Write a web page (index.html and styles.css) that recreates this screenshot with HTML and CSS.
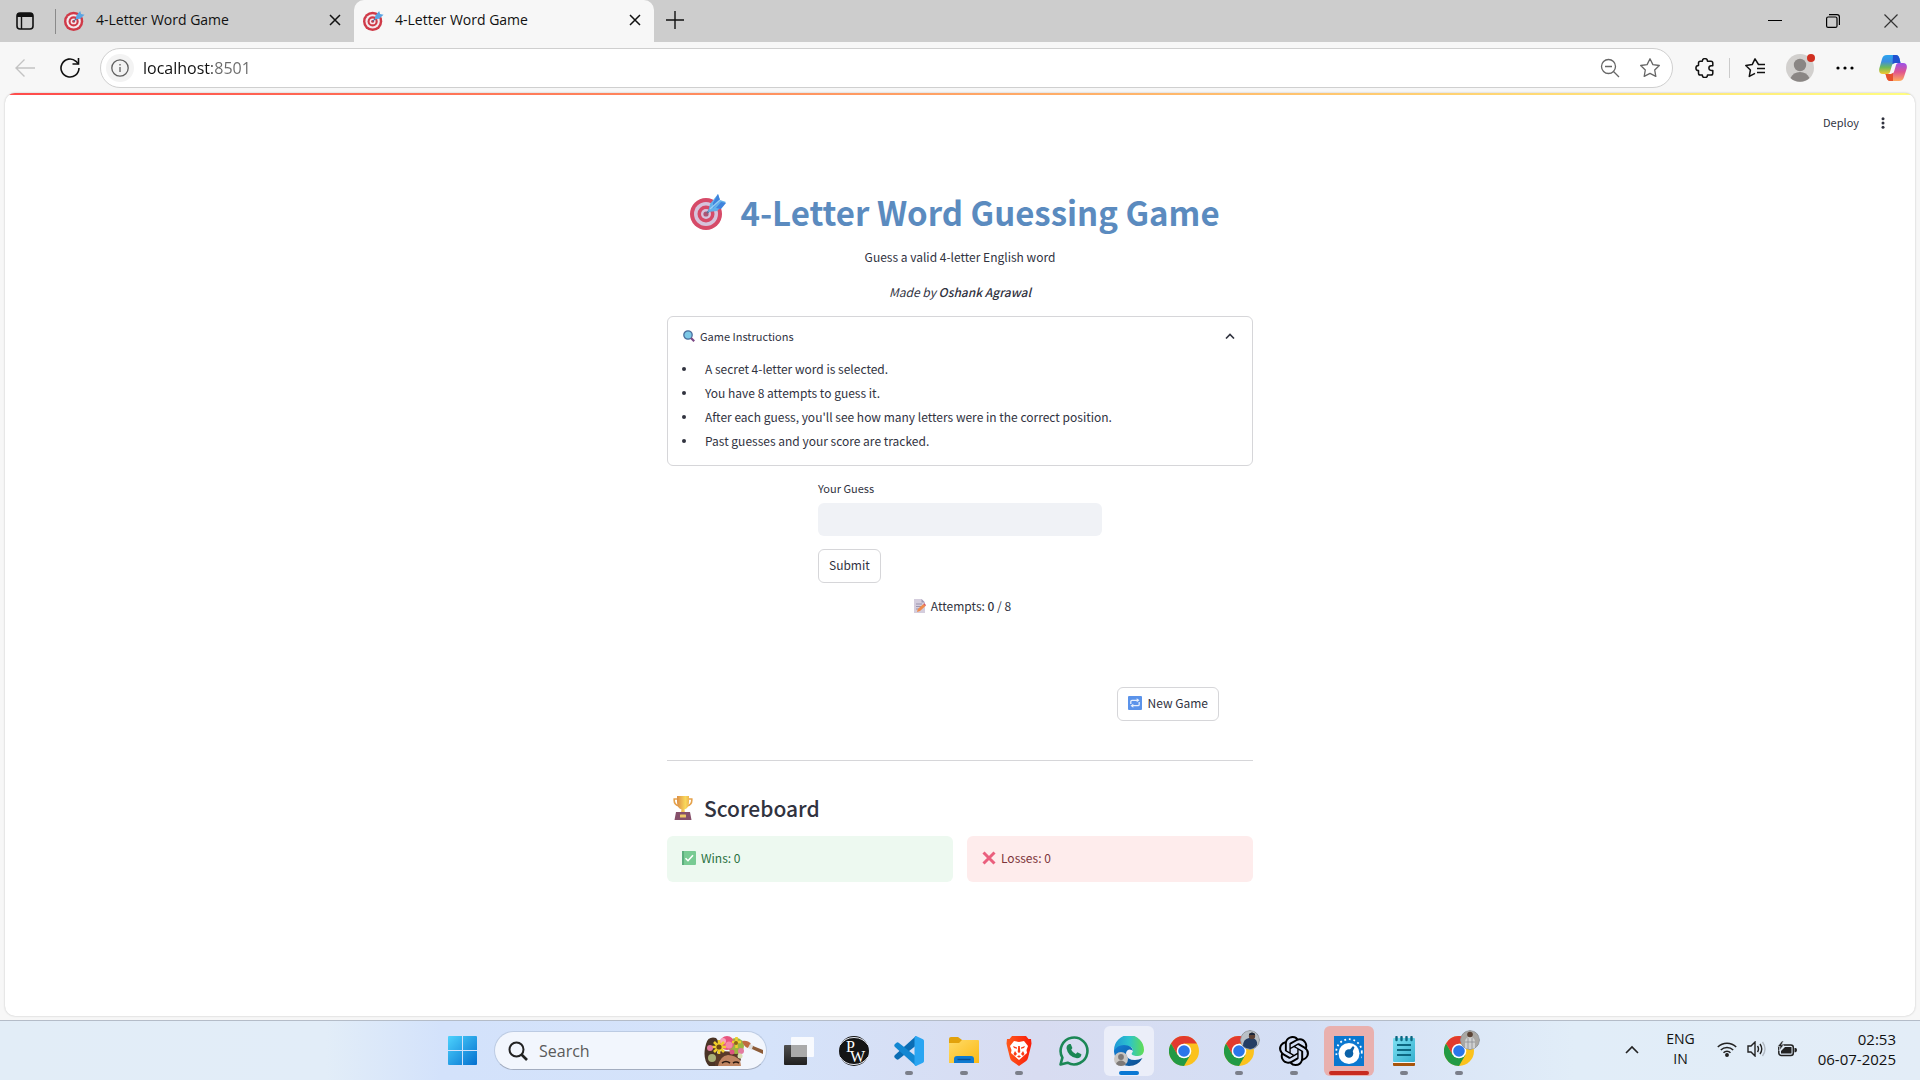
FILE: index.html
```html
<!DOCTYPE html>
<html lang="en">
<head>
<meta charset="utf-8">
<title>4-Letter Word Game</title>
<link rel="stylesheet" href="styles.css">
</head>
<body>
<svg class="defs" aria-hidden="true">
  <defs>
    <linearGradient id="win" x1="0" y1="0" x2="1" y2="1"><stop offset="0" stop-color="#4cd2fd"/><stop offset="1" stop-color="#0470cf"/></linearGradient>
    <linearGradient id="tv" x1="0" y1="0" x2="0" y2="1"><stop offset="0" stop-color="#505050"/><stop offset="1" stop-color="#202020"/></linearGradient>
    <linearGradient id="folder" x1="0" y1="0" x2="1" y2="1"><stop offset="0" stop-color="#ffdb68"/><stop offset="1" stop-color="#fbb914"/></linearGradient>
    <linearGradient id="brave" x1="0" y1="0" x2="1" y2="0"><stop offset="0" stop-color="#ff5a1c"/><stop offset="1" stop-color="#f91c0a"/></linearGradient>
    <linearGradient id="edgeTop" x1="0" y1="0" x2="1" y2="0"><stop offset="0" stop-color="#1f98d8"/><stop offset=".5" stop-color="#2cc3cd"/><stop offset="1" stop-color="#62dd52"/></linearGradient>
    <linearGradient id="edgeBot" x1="0" y1="0" x2="1" y2="1"><stop offset="0" stop-color="#1480d8"/><stop offset="1" stop-color="#0c4c8c"/></linearGradient>
    <linearGradient id="note" x1="0" y1="0" x2="1" y2="1"><stop offset="0" stop-color="#7de0f2"/><stop offset="1" stop-color="#35b0cf"/></linearGradient>
    <linearGradient id="cupG" x1="0" y1="0" x2="1" y2="0"><stop offset="0" stop-color="#dd8f47"/><stop offset=".7" stop-color="#f9d85c"/><stop offset="1" stop-color="#eeb650"/></linearGradient>
    <linearGradient id="copA" x1="0" y1="0" x2="0" y2="1"><stop offset="0" stop-color="#2ba5ef"/><stop offset=".35" stop-color="#3d8ee0"/><stop offset=".65" stop-color="#6db95b"/><stop offset="1" stop-color="#f3c72f"/></linearGradient>
    <linearGradient id="copB" x1="0" y1="0" x2="0" y2="1"><stop offset="0" stop-color="#9b52ea"/><stop offset=".5" stop-color="#e0558f"/><stop offset="1" stop-color="#ffab5e"/></linearGradient>
    <symbol id="target" viewBox="0 0 24 24">
      <circle cx="11" cy="13" r="11" fill="#cf3a48"/><circle cx="11" cy="13" r="8.2" fill="#f5e9ee"/><circle cx="11" cy="13" r="5.8" fill="#cf3a48"/><circle cx="11" cy="13" r="3.4" fill="#f5e9ee"/><circle cx="11" cy="13" r="1.7" fill="#cf3a48"/>
      <path d="M11 13 15.500 8.500" stroke="#3d6fa5" stroke-width="1.200"/><path d="M13.500 10.500 14 6.500 18.500 1l1 3.500L23.500 5.500 18.500 10z" fill="#5aa4e2"/>
    </symbol>
    <symbol id="target-soft" viewBox="0 0 36 36">
      <circle cx="16" cy="20" r="16" fill="#d64a68"/><circle cx="16" cy="20" r="12" fill="#d6c3dc"/><circle cx="16" cy="20" r="8.500" fill="#d64a68"/><circle cx="16" cy="20" r="5" fill="#d6c3dc"/><circle cx="16" cy="20" r="2.600" fill="#ad5474"/>
      <path d="M17 19 24 12" stroke="#5d6f94" stroke-width="2"/><path d="M18 18l2-8 8-10 2 6 6 2-9 9z" fill="#62b0ea"/><path d="M23 9 28 0l2 6-7 8zM26 14l5-6 5 1-5 6z" fill="#3f83dc"/><path d="M20 15 30 6" stroke="#9bd0f5" stroke-width="1.200"/>
    </symbol>
    <symbol id="chrome" viewBox="0 0 30 30">
      <circle cx="15" cy="15" r="15" fill="#fbc21d"/>
      <path d="M2 7.500A15 15 0 0 1 28 7.500H15L8.500 18.700z" fill="#e23a2e"/>
      <path d="M2 7.500A15 15 0 0 0 15 30l6.500-11.300L15 15 8.500 18.800z" fill="#229a45"/>
      <circle cx="15" cy="15" r="7.300" fill="#fff"/><circle cx="15" cy="15" r="5.800" fill="#2a76ea"/>
    </symbol>
    <symbol id="x" viewBox="0 0 14 14"><path d="M2 2l10 10M12 2 2 12" stroke="currentColor" stroke-width="1.500" fill="none"/></symbol>
  </defs>
</svg>

<div class="browser">
  <header class="tabs">
    <button class="icon-btn tab-menu" aria-label="Tab actions menu">
      <svg width="18" height="18" viewBox="0 0 18 18"><rect x="1" y="1" width="16" height="16" rx="3" fill="none" stroke="#111" stroke-width="1.600"/><path d="M1 5V4a3 3 0 0 1 3-3h10a3 3 0 0 1 3 3v1z" fill="#111"/><path d="M5.500 5v12" stroke="#111" stroke-width="1.400"/></svg>
    </button>
    <div class="tab tab-idle">
      <svg class="favicon"><use href="#target"/></svg><span class="tab-title">4-Letter Word Game</span>
      <button class="icon-btn" aria-label="Close tab"><svg width="14" height="14"><use href="#x"/></svg></button>
    </div>
    <div class="tab tab-active">
      <svg class="favicon"><use href="#target"/></svg><span class="tab-title">4-Letter Word Game</span>
      <button class="icon-btn" aria-label="Close tab"><svg width="14" height="14"><use href="#x"/></svg></button>
    </div>
    <button class="icon-btn new-tab" aria-label="New tab"><svg width="18" height="18" viewBox="0 0 18 18"><path d="M9 0v18M0 9h18" stroke="#111" stroke-width="1.400"/></svg></button>
    <div class="window-controls">
      <button class="icon-btn" aria-label="Minimize"><svg width="14" height="14" viewBox="0 0 14 14"><path d="M0 6.500h14" stroke="#000"/></svg></button>
      <button class="icon-btn" aria-label="Restore"><svg width="14" height="14" viewBox="0 0 14 14" fill="none" stroke="#000" stroke-width="1.200"><rect x=".6" y="3" width="10.400" height="10.400" rx="1.500"/><path d="M3 .6h8a2.400 2.400 0 0 1 2.400 2.400v8"/></svg></button>
      <button class="icon-btn" aria-label="Close"><svg width="14" height="14" viewBox="0 0 14 14"><path d="M.5.5l13 13M13.500.5l-13 13" stroke="#333" stroke-width="1.200"/></svg></button>
    </div>
  </header>

  <nav class="toolbar">
    <button class="icon-btn" aria-label="Back"><svg width="20" height="20" viewBox="0 0 20 20" fill="none" stroke="#c3c3c3" stroke-width="1.400"><path d="M20 10H1M9.500 1.500 1 10l8.500 8.500"/></svg></button>
    <button class="icon-btn" aria-label="Reload"><svg width="20" height="20" viewBox="0 0 20 20" fill="none" stroke="#111" stroke-width="1.600"><path d="M19 10a9 9 0 1 1-3-6.700L18.500 6"/><path d="M18.500 0v6h-6"/></svg></button>
    <div class="address">
      <span class="site-info"><svg width="18" height="18" viewBox="0 0 18 18" fill="none" stroke="#606060" stroke-width="1.300"><circle cx="9" cy="9" r="8.200"/><path d="M9 8v5M9 5v1.500"/></svg></span>
      <input class="url" type="text" value="localhost:8501" aria-label="Address">
      <button class="icon-btn" aria-label="Zoom out"><svg width="20" height="20" viewBox="0 0 20 20" fill="none" stroke="#666" stroke-width="1.300"><circle cx="8.500" cy="8.500" r="7"/><path d="M13.500 13.500 19 19M5 8.500h7"/></svg></button>
      <button class="icon-btn" aria-label="Add to favorites"><svg width="20" height="20" viewBox="0 0 20 20" fill="none" stroke="#666" stroke-width="1.300" stroke-linejoin="round"><path d="M10 .8l2.900 5.800 6.400.9-4.600 4.500 1.100 6.400L10 15.400l-5.800 3 1.100-6.400L.7 7.500l6.400-.9z"/></svg></button>
    </div>
    <div class="tools">
      <button class="icon-btn" aria-label="Extensions"><svg width="20" height="20" viewBox="0 0 20 20" fill="none" stroke="#111" stroke-width="1.500" stroke-linejoin="round"><path d="M7.300 3.200a2.600 2.600 0 0 1 5.200 0h3.500q1.800 0 1.800 1.800v2.800h-1.600a2.300 2.300 0 0 0 0 4.600h1.600v2.800q0 1.800-1.800 1.800h-3.500a2.600 2.600 0 0 1-5.200 0H5.300q-1.800 0-1.800-1.800v-2.600a2.600 2.600 0 0 1 0-5.200V5q0-1.800 1.800-1.800z"/></svg></button>
      <span class="tool-sep"></span>
      <button class="icon-btn" aria-label="Favorites"><svg width="20" height="20" viewBox="0 0 20 20" fill="none" stroke="#111" stroke-width="1.500" stroke-linejoin="round"><path d="M17.500 6.500h-4L10 .8 7.200 6.600l-6.400.9L5.400 12l-1.100 6.400 5.700-3M12 10.500h8M12 14.500h8M13.500 6.500H20"/></svg></button>
      <button class="icon-btn profile" aria-label="Profile"><svg width="28" height="28" viewBox="0 0 28 28"><circle cx="14" cy="14" r="14" fill="#d2d0ce"/><circle cx="14" cy="11" r="6.200" fill="#8a8684"/><path d="M4.500 24a10.500 10.500 0 0 1 19 0A14 14 0 0 1 4.500 24z" fill="#8a8684"/></svg><span class="alert-dot"></span></button>
      <button class="icon-btn" aria-label="Settings and more"><svg width="18" height="4" viewBox="0 0 18 4"><circle cx="2" cy="2" r="1.600"/><circle cx="9" cy="2" r="1.600"/><circle cx="16" cy="2" r="1.600"/></svg></button>
      <button class="icon-btn copilot" aria-label="Copilot"><svg width="28" height="26" viewBox="0 0 28 26"><path d="M8 0h9c2 0 2.800 1.300 3.500 3.500L21.500 8H16c-2 0-2.800 1.500-3.400 3.500L11 17c-.6 1.600-1.500 2-3 2H4C.5 19-.3 16.500.3 13.500L3 4C3.800 1.300 5 0 8 0z" fill="url(#copA)"/><path d="M14 0h3c2 0 2.800 1.300 3.500 3.500L21.500 8H16l-2.500 1z" fill="#2152cf"/><path d="M20 26h-9c-2 0-2.800-1.300-3.500-3.500L6.500 19H12c2 0 2.800-1.500 3.400-3.500L17 10c.6-1.600 1.500-2 3-2h4c3.500 0 4.300 2.500 3.700 5.500L25 22c-.8 2.700-2 4-5 4z" fill="url(#copB)"/><path d="M14 26h-3c-2 0-2.800-1.300-3.500-3.500L6.500 19H12l2-1z" fill="#e5502d"/></svg></button>
    </div>
  </nav>

  <div class="page">
    <div class="app-bar">
      <button class="deploy">Deploy</button>
      <button class="icon-btn" aria-label="Main menu"><svg width="4" height="12" viewBox="0 0 4 12" fill="#31333f"><circle cx="2" cy="1.700" r="1.500"/><circle cx="2" cy="6" r="1.500"/><circle cx="2" cy="10.300" r="1.500"/></svg></button>
    </div>
    <main class="content">
      <h1><svg width="36" height="36"><use href="#target-soft"/></svg>4-Letter Word Guessing Game</h1>
      <p class="lead">Guess a valid 4-letter English word</p>
      <p class="credit">Made by <strong>Oshank Agrawal</strong></p>

      <details class="expander" open>
        <summary>
          <svg width="12" height="12" viewBox="0 0 12 12"><circle cx="5" cy="5" r="4.200" fill="#7cc8e6" stroke="#4a6d9c" stroke-width="1.300"/><path d="M8 8l3.200 3.200" stroke="#7c4a86" stroke-width="2.200"/></svg>
          <span>Game Instructions</span>
          <svg class="chevron" width="10" height="6" viewBox="0 0 10 6" fill="none" stroke="#31333f" stroke-width="1.600"><path d="M1 5.500 5 1.500l4 4"/></svg>
        </summary>
        <ul>
          <li>A secret 4-letter word is selected.</li>
          <li>You have 8 attempts to guess it.</li>
          <li>After each guess, you'll see how many letters were in the correct position.</li>
          <li>Past guesses and your score are tracked.</li>
        </ul>
      </details>

      <form class="guess" onsubmit="return false">
        <label for="guess">Your Guess</label>
        <input id="guess" type="text" maxlength="4" autocomplete="off">
        <button class="btn" type="submit">Submit</button>
      </form>

      <p class="attempts">
        <svg width="12" height="14" viewBox="0 0 12 14"><path d="M0 0h7.500L11 3.500V14H0z" fill="#d4cddd"/><path d="M7.500 0v3.500H11z" fill="#9f97b5"/><path d="M2 5h6M2 7.500h5M2 10h3" stroke="#9b93ad"/><path d="M3 13l.8-3L9.500 5l2 2L6 12z" fill="#f08a4b"/><path d="M9.500 5l1-.8 1.500 2-.7.800z" fill="#d94b5c"/></svg>
        <span>Attempts: <strong>0</strong> / 8</span>
      </p>

      <div class="actions">
        <button class="btn" type="button"><svg width="14" height="14" viewBox="0 0 14 14"><rect width="14" height="14" rx="1" fill="#5b93ea"/><path d="M2.800 8V5.500q0-1.200 1.200-1.200h5.500M11.200 6v2.500q0 1.200-1.200 1.200H4.500" fill="none" stroke="#e6effc" stroke-width="1.300"/><path d="M8.700 2.300l2.800 2-2.800 2zM5.300 7.700v4l-2.800-2z" fill="#e6effc"/></svg>New Game</button>
      </div>

      <hr>

      <h2><svg width="20" height="24" viewBox="0 0 20 24"><path d="M4.500 3H1.200q-.5 6 5 7M15.500 3h3.300q.5 6-5 7" fill="none" stroke="#e5a24c" stroke-width="1.600"/><path d="M4 0h12v6q0 6-4.500 7.500L12 17H8l.5-3.500Q4 12 4 6z" fill="url(#cupG)"/><path d="M3 16h14l1.500 8h-17z" fill="#86506a"/><rect x="7" y="18.500" width="6" height="3" rx=".5" fill="#edc767"/></svg>Scoreboard</h2>
      <div class="scores">
        <div class="score wins"><svg width="14" height="14" viewBox="0 0 14 14"><rect width="14" height="14" rx="1" fill="#78cb93"/><path d="M0 0h2v14H0z" fill="#5cae7e"/><path d="M3.500 7.200 6 9.700l5-5.500" fill="none" stroke="#fff" stroke-width="1.600"/></svg>Wins: 0</div>
        <div class="score losses"><svg width="14" height="14" viewBox="0 0 14 14"><path d="M1.500 1.500l11 11M12.500 1.500l-11 11" stroke="#ea5f7d" stroke-width="3"/></svg>Losses: 0</div>
      </div>
    </main>
  </div>
</div>

<footer class="taskbar">
  <span></span>
  <div class="apps">
    <button class="start" aria-label="Start"><svg width="29" height="29" viewBox="0 0 29 29"><path d="M1 0h13v14H0V1q0-1 1-1zM15 0h13q1 0 1 1v13H15zM0 15h14v14H1q-1 0-1-1zM15 15h14v13q0 1-1 1H15z" fill="url(#win)"/></svg></button>
    <label class="search">
      <svg width="20" height="20" viewBox="0 0 20 20" fill="none" stroke="#222" stroke-width="2"><circle cx="8.500" cy="8.500" r="7"/><path d="M13.500 13.500 19 19" stroke-width="2.600"/></svg>
      <input type="text" placeholder="Search" aria-label="Search">
      <svg class="search-art" width="60" height="30" viewBox="0 0 60 30">
        <path d="M2 8Q4 0 12 2l6 8-5 6q4 8 1 14H5Q-1 24 1 12z" fill="#4a3426"/><path d="M11 30q1-12 12-14 10 0 13 8l1 6z" fill="#c08562"/><path d="M11 30q-1-12 6-15l16 1q4 5 4 9-6-6-13-6-8 1-10 11z" fill="#5a3a28"/>
        <path d="M18 27q4-3 8 0M29 27q3-2 6 0" stroke="#2a1a12" stroke-width="1.600" fill="none"/>
        <circle cx="32" cy="10" r="8" fill="#9cb544"/><circle cx="8" cy="22" r="4" fill="#a9b077"/><circle cx="23" cy="7" r="7" fill="#e8557f"/><circle cx="25" cy="9" r="3.500" fill="#f58aa8"/><circle cx="19" cy="5" r="3" fill="#f8a4bd"/>
        <g stroke="#f0ce2c" stroke-width="2.600"><path d="M8 11h14M15 4v14M10 6l10 10M20 6 10 16M28 6h9M32.500 1v11"/></g><circle cx="15" cy="11" r="2.600" fill="#6f4717"/><circle cx="32" cy="7" r="2" fill="#8b651b"/>
        <circle cx="6" cy="12" r="3" fill="#e37ba0"/><circle cx="37" cy="15" r="3" fill="#e37ba0"/><circle cx="28" cy="16" r="2.500" fill="#dc5480"/><circle cx="36" cy="20" r="2.500" fill="#d9ddb1"/>
        <path d="M38 5q6-1 9 3l-3 4q-4-1-6-7z" fill="#bf6b40"/><path d="M46 8l4 2-2 4-4-2z" fill="#ddd"/><path d="M49 10l10 4v4L48 13z" fill="#8c5b37"/>
      </svg>
    </label>
    <button class="app" aria-label="Task view"><svg width="30" height="28" viewBox="0 0 30 28"><rect y="8" width="23" height="20" rx="1" fill="url(#tv)"/><rect x="7" y="0" width="23" height="20" rx="1" fill="#fff" opacity=".82"/><path d="M7 8h16v12H7z" fill="#aaa"/></svg></button>
    <button class="app" aria-label="PW"><svg width="30" height="30" viewBox="0 0 30 30"><circle cx="15" cy="15" r="14" fill="#151515" stroke="#151515" stroke-width="2"/><path d="M1 9Q6 1.500 15 1.500T29 9M1 21q5 7.500 14 7.500T29 21" stroke="#e9ecf4" fill="none"/><text x="7" y="16" class="pw">P</text><text x="11" y="26" class="pw">W</text></svg></button>
    <button class="app running" aria-label="Visual Studio Code"><svg width="30" height="30" viewBox="0 0 30 30"><path d="M22 0 1 19q-1.500 1.500 0 3l1.500 1.300q1 .8 2.200 0L24 8z" fill="#0a6db4"/><path d="M22 30 1 11Q-.5 9.500 1 8l1.500-1.300q1-.8 2.200 0L24 22z" fill="#1287d2"/><path d="M22 0l7 3.200q1 .5 1 1.800v20q0 1.300-1 1.800L22 30q-1.200.2-1.500-1.500V1.500Q21-.2 22 0z" fill="#2aa5f2"/></svg></button>
    <button class="app running" aria-label="File Explorer"><svg width="30" height="28" viewBox="0 0 30 28"><path d="M0 2q0-2 2-2h7l4 3v6H0z" fill="#e2a20c"/><path d="M0 6h10l3-3h16q1 0 1 1v22H0z" fill="url(#folder)"/><path d="M5 26v-4q0-3 3-3h14q3 0 3 3v4z" fill="#0f7ad0"/><path d="M8.500 22.500h13" stroke="#0a4f91" stroke-width="1.400"/></svg></button>
    <button class="app running" aria-label="Brave"><svg width="26" height="30" viewBox="0 0 26 30"><path d="M6 0h14l2.500 3L25 3l.5 4.500L25 10l-3 12q-.5 2-2.500 3.500L13 30l-6.500-4.500Q4.500 24 4 22L1 10 .5 7.500 1 3l2.500 0z" fill="url(#brave)"/><path d="M8 5l5 1 5-1 4 5-1.500 4 .5 3-4 3.500-4 3.500-4-3.500L5 17l.5-3L4 10z" fill="#fff"/><path d="M7 10l4 1.500v1.300L8 12zM19 10l-4 1.500v1.300L18 12zM12.200 10h1.600l.5 6-1.300 1-1.300-1zM9 15l2 3-2 2-1.500-2zM17 15l-2 3 2 2 1.500-2zM11 20.500l2-1.300 2 1.300-2 1.300z" fill="#fb3c16"/></svg></button>
    <button class="app" aria-label="WhatsApp"><svg width="30" height="30" viewBox="0 0 30 30"><path d="M1.500 28.500 3.400 21.600A13.400 13.400 0 1 1 8.600 26.700z" fill="none" stroke="#1b8755" stroke-width="2.600" stroke-linejoin="round"/><path d="M10.200 8h1.500l1.700 4-1.200 1.800q1.500 3 4.600 4.300l1.600-1.800 4 2q-.2 4-4.400 4-9-1.300-10.500-10Q7.500 9 10.200 8z" fill="#1b8755"/></svg></button>
    <button class="app current" aria-label="Microsoft Edge"><svg width="30" height="30" viewBox="0 0 30 30"><path d="M0 14A15 15 0 0 1 30 14q0 5.500-6 6-5 0-6.500-2l1.500-3q-.5-5-6-5Q5 10.500 0 17z" fill="url(#edgeTop)"/><path d="M0 15q3-6 10-6 8 0 9 6-1-1.500-3.500-1.500-3.500.5-3.500 4.500 1 6 9 6 4 0 7.500-2Q24 30 15 30 1 29 0 15z" fill="url(#edgeBot)"/><circle cx="7" cy="23" r="7" fill="#c9c6c3"/><circle cx="7" cy="21" r="2.900" fill="#7d7977"/><path d="M2 28q1.500-3.500 5-3.500t5 3.500q-2 2-5 2t-5-2z" fill="#7d7977"/></svg></button>
    <button class="app" aria-label="Chrome"><svg width="30" height="30"><use href="#chrome"/></svg></button>
    <button class="app running" aria-label="Chrome profile 1"><svg width="30" height="30"><use href="#chrome"/></svg>
      <svg class="avatar" width="20" height="20" viewBox="0 0 20 20"><circle cx="10" cy="10" r="9.500" fill="#b9c0c6" stroke="#8f959b"/><path d="M3 16q0-7 6-8h4q5 2 4 7-3 4-7 4-4 0-7-3z" fill="#243d63"/><circle cx="12" cy="6" r="3.200" fill="#5b4034"/><path d="M9 4q3-3 6 0v1H9z" fill="#1b2638"/></svg></button>
    <button class="app running" aria-label="ChatGPT"><svg width="30" height="30" viewBox="0 0 24 24"><path d="M22.2819 9.8211a5.9847 5.9847 0 0 0-.5157-4.9108 6.0462 6.0462 0 0 0-6.5098-2.9A6.0651 6.0651 0 0 0 4.9807 4.1818a5.9847 5.9847 0 0 0-3.9977 2.9 6.0462 6.0462 0 0 0 .7427 7.0966 5.98 5.98 0 0 0 .511 4.9107 6.051 6.051 0 0 0 6.5146 2.9001A5.9847 5.9847 0 0 0 13.2599 24a6.0557 6.0557 0 0 0 5.7718-4.2058 5.9894 5.9894 0 0 0 3.9977-2.9001 6.0557 6.0557 0 0 0-.7475-7.0729zm-9.022 12.6081a4.4755 4.4755 0 0 1-2.8764-1.0408l.1419-.0804 4.7783-2.7582a.7948.7948 0 0 0 .3927-.6813v-6.7369l2.02 1.1686a.071.071 0 0 1 .038.052v5.5826a4.504 4.504 0 0 1-4.4945 4.4944zm-9.6607-4.1254a4.4708 4.4708 0 0 1-.5346-3.0137l.142.0852 4.783 2.7582a.7712.7712 0 0 0 .7806 0l5.8428-3.3685v2.3324a.0804.0804 0 0 1-.0332.0615L9.74 19.9502a4.4992 4.4992 0 0 1-6.1408-1.6464zM2.3408 7.8956a4.485 4.485 0 0 1 2.3655-1.9728V11.6a.7664.7664 0 0 0 .3879.6765l5.8144 3.3543-2.0201 1.1685a.0757.0757 0 0 1-.071 0l-4.8303-2.7865A4.504 4.504 0 0 1 2.3408 7.872zm16.5963 3.8558L13.1038 8.364 15.1192 7.2a.0757.0757 0 0 1 .071 0l4.8303 2.7913a4.4944 4.4944 0 0 1-.6765 8.1042v-5.6772a.79.79 0 0 0-.407-.667zm2.0107-3.0231l-.142-.0852-4.7735-2.7818a.7759.7759 0 0 0-.7854 0L9.409 9.2297V6.8974a.0662.0662 0 0 1 .0284-.0615l4.8303-2.7866a4.4992 4.4992 0 0 1 6.6802 4.66zM8.3065 12.863l-2.02-1.1638a.0804.0804 0 0 1-.038-.0567V6.0742a4.4992 4.4992 0 0 1 7.3757-3.4537l-.142.0805L8.704 5.459a.7948.7948 0 0 0-.3927.6813zm1.0976-2.3654l2.602-1.4998 2.6069 1.4998v2.9994l-2.5974 1.4997-2.6067-1.4997Z"/></svg></button>
    <button class="app urgent" aria-label="Timer"><svg width="30" height="30" viewBox="0 0 30 30"><path d="M0 0h30v30H0z" fill="#0b78d0"/><circle cx="15" cy="16" r="12.800" fill="none" stroke="#fff" stroke-width="1.800" stroke-dasharray="1.800 2.800"/><path d="M3 20h24v10H3z" fill="#0b78d0"/><circle cx="15" cy="17.500" r="10.500" fill="#fff"/><circle cx="15" cy="17.500" r="4.300" fill="#0b62a8"/><path d="M13 17 19 10l1.500 1.500L17 19z" fill="#0b62a8"/></svg></button>
    <button class="app running" aria-label="Notepad"><svg width="22" height="30" viewBox="0 0 22 30"><path d="M0 26h22v3q0 1-1 1H1q-1 0-1-1z" fill="#a7540b"/><path d="M0 25h22v2H0z" fill="#f4f4f4"/><rect y="2" width="22" height="24" rx="1" fill="url(#note)"/><path d="M4 9h14M4 14h14M4 19h14" stroke="#0c6781" stroke-width="1.800"/><path d="M3.500 1v3M8.500 1v3M13.500 1v3M18.500 1v3" stroke="#0c6781" stroke-width="2.400" stroke-linecap="round"/></svg></button>
    <button class="app running" aria-label="Chrome profile 2"><svg width="30" height="30"><use href="#chrome"/></svg>
      <svg class="avatar" width="20" height="20" viewBox="0 0 20 20"><circle cx="10" cy="10" r="9.500" fill="#a9a7a3" stroke="#8f959b"/><path d="M5 18V11q1-4 5-4t5 4v7q-5 2-10 0z" fill="#cfd0d0"/><path d="M8 8v11M12 8v11M5 12h10" stroke="#8b8e92" stroke-width=".8"/><circle cx="10" cy="4.500" r="2.800" fill="#5a4437"/></svg></button>
  </div>
  <div class="tray">
    <svg width="14" height="9" viewBox="0 0 14 9" fill="none" stroke="#222" stroke-width="1.600"><path d="M1 8l6-6 6 6"/></svg>
    <span class="lang">ENG<br>IN</span>
    <span class="status">
      <svg width="20" height="16" viewBox="0 0 20 16" fill="none" stroke="#222" stroke-width="1.500"><path d="M.8 6a13 13 0 0 1 18.400 0M3.800 9a8.800 8.800 0 0 1 12.400 0M6.500 11.800a5 5 0 0 1 7 0"/><circle cx="10" cy="14" r="1.200" fill="#222"/></svg>
      <svg width="20" height="16" viewBox="0 0 20 16" fill="none" stroke="#222" stroke-width="1.400"><path d="M1 5h3l4-4v14l-4-4H1zM10.500 5q2 3 0 6M13 3q3.500 5 0 10"/><path d="M15.500 1q5 7 0 14" stroke="#b3bbc4"/></svg>
      <svg width="20" height="16" viewBox="0 0 20 16"><rect x="1.800" y="4" width="14.500" height="10.500" rx="2.500" fill="none" stroke="#222" stroke-width="1.500"/><path d="M4 12.500V10l4-4h6.500v6.500zM17.500 7h1q1.500 0 1.500 2t-1.500 2.200h-1z" fill="#222"/><path d="M5 0 .5 5.500h2.700L2 10l4.800-6H4.500L6.500 0z" fill="#222" stroke="#e3edf7" stroke-width=".6"/></svg>
    </span>
    <time class="clock">02:53<br>06-07-2025</time>
  </div>
</footer>
</body>
</html>
```
FILE: styles.css
```css
* { box-sizing: border-box; }
html, body { height: 100%; }
body {
  margin: 0;
  min-height: 100vh;
  display: flex;
  flex-direction: column;
  background: #f7f7f7;
  color: #111;
  font: 14px/20px "Open Sans", "Noto Sans", sans-serif;
}
.defs { position: absolute; width: 0; height: 0; }
svg { display: block; flex: none; }
button, input { font: inherit; color: inherit; }
button { cursor: pointer; }
.icon-btn {
  display: flex;
  align-items: center;
  justify-content: center;
  padding: 0;
  border: 0;
  background: none;
}
.browser { flex: 1; display: flex; flex-direction: column; }

/* Tab strip */
.tabs { display: flex; height: 42px; background: #cdcdcd; }
.tab-menu { width: 50px; }
.tab { display: flex; align-items: center; padding-bottom: 2px; }
.tab-idle { width: 304px; padding-left: 8px; padding-right: 12px; position: relative; }
.tab-idle::before { content: ""; position: absolute; left: 5px; top: 9px; width: 1px; height: 25px; background: #8a8a8a; }
.tab-idle .favicon { margin-left: 6px; }
.tab-active { width: 300px; padding-left: 9px; padding-right: 12px; background: #f7f7f7; border-radius: 10px 10px 0 0; }
.favicon { width: 21px; height: 21px; }
.tab-title { flex: 1; margin-left: 11px; }
.new-tab { width: 42px; padding-bottom: 2px; }
.window-controls { margin-left: auto; display: flex; }
.window-controls .icon-btn { width: 58px; }

/* Toolbar */
.toolbar { display: flex; align-items: center; height: 51px; padding: 0 13px 0 15px; }
.toolbar > .icon-btn { margin-right: 25px; }
.toolbar > .icon-btn + .icon-btn { margin-right: 20px; }
.address {
  flex: 1;
  display: flex;
  align-items: center;
  height: 40px;
  padding: 0 12px 0 5px;
  background: #fff;
  border: 1px solid #cfcfcf;
  border-radius: 20px;
}
.site-info { display: flex; align-items: center; justify-content: center; width: 28px; height: 28px; border-radius: 50%; background: #f3f3f3; }
/* The host is dark and the port is greyed out */
.url {
  flex: 1;
  min-width: 0;
  margin-left: 9px;
  padding: 0;
  border: 0;
  outline: 0;
  background: linear-gradient(90deg, #111 69px, #6a6a6a 69px);
  background-clip: text;
  color: transparent;
  caret-color: #111;
  font-size: 16px;
}
.address .icon-btn { margin-left: 20px; }
.tools { display: flex; align-items: center; margin-left: 22px; }
.tool-sep { width: 1px; height: 20px; margin: 0 15px 0 14px; background: #cbcbcb; }
.profile { position: relative; margin: 0 22px 0 21px; }
.alert-dot { position: absolute; top: 0; right: -1px; width: 8px; height: 8px; border-radius: 50%; background: #d13021; }
.copilot { margin-left: 25px; }

/* Page */
.page {
  flex: 1;
  margin: 0 5px 4px;
  background: linear-gradient(90deg, #ff4b4b, #fffd80) top / 100% 2px no-repeat #fff;
  border-radius: 10px;
  box-shadow: 0 0 2px #bbb;
  color: #31333f;
  font: 12px/18px "Noto Sans CJK SC", "Noto Sans", sans-serif;
}
.page strong { font-weight: 500; }
.app-bar { display: flex; align-items: center; justify-content: flex-end; height: 60px; padding-right: 30px; }
.deploy { margin-right: 22px; padding: 0 0 2px; border: 0; background: none; font-size: 11px; }
.content { max-width: 586px; margin: 0 auto; padding: 38px 0 60px; }
.content p { margin: 0; text-align: center; }
h1 {
  display: flex;
  align-items: center;
  justify-content: center;
  gap: 14px;
  margin: 0 0 15px;
  padding-right: 10px;
  color: #5b8bbf;
  font-size: 33px;
  line-height: 42px;
  white-space: nowrap;
}
.content .credit { margin: 17px 0 15px; font-style: italic; }
.expander { border: 1px solid #d6d6d9; border-radius: 6px; padding: 0 16px 12px; }
summary { display: flex; align-items: center; gap: 5px; height: 37px; margin-bottom: 3px; font-size: 11px; list-style: none; cursor: pointer; }
summary svg { margin-left: -1px; }
summary .chevron { margin: 0 1px 0 auto; }
ul { margin: 0 0 0 -2px; padding: 0; line-height: 24px; list-style: none; }
li { display: flex; align-items: center; gap: 19px; }
li::before { content: ""; width: 4px; height: 4px; border-radius: 50%; background: #31333f; }
.guess { display: flex; flex-direction: column; align-items: flex-start; max-width: 284px; margin: 13px auto 14px; }
.guess label { font-size: 11px; }
.guess input { width: 100%; height: 33px; margin: 6px 0 13px; padding: 0 10px; border: 0; border-radius: 6px; background: #f0f2f6; }
.btn { display: flex; align-items: center; gap: 6px; height: 34px; padding: 0 10px 2px; border: 1px solid #d6d6d9; border-radius: 6px; background: #fff; }
.content .attempts { display: flex; justify-content: center; align-items: center; gap: 5px; padding-left: 5px; }
.actions { display: flex; justify-content: flex-end; margin: 72px 34px 39px 0; }
hr { margin: 0 0 31px; border: 0; border-top: 1px solid #d6d6d9; }
h2 { display: flex; align-items: center; gap: 11px; margin: 0 0 12px; padding-left: 6px; font-size: 21px; line-height: 32px; font-weight: 500; }
.scores { display: grid; grid-template-columns: 1fr 1fr; gap: 14px; }
.score { display: flex; align-items: center; gap: 5px; height: 46px; padding: 0 15px 2px; border-radius: 6px; }
.wins { background: #edf9f0; color: #29713f; }
.losses { background: #feecec; color: #7d353b; }

/* Taskbar */
.taskbar {
  display: grid;
  grid-template-columns: 1fr auto 1fr;
  height: 60px;
  border-top: 1px solid #b4bcc8;
  background: linear-gradient(90deg, #e2edf7 0%, #e2edf8 17%, #d3e2fb 23%, #d5e3fa 40%, #d8dcf1 54%, #d4dff5 68%, #e1edf8 82%, #e3edf7 100%);
  font-size: 15px;
}
.apps { display: flex; align-items: center; gap: 5px; }
.start { display: flex; align-items: center; justify-content: center; width: 53px; height: 50px; padding: 0; border: 0; background: none; }
.search {
  display: flex;
  align-items: center;
  width: 273px;
  height: 39px;
  margin-right: 2px;
  padding: 0 2px 0 13px;
  border: 1px solid #bccbe3;
  border-bottom-color: #a3adc0;
  border-radius: 20px;
  background: #f2f6fd;
}
.search input { flex: 1; min-width: 0; margin-left: 11px; padding: 0; border: 0; outline: 0; background: none; font-size: 16px; }
.search input::placeholder { color: #5a5a5a; opacity: 1; }
.app { position: relative; display: flex; align-items: center; justify-content: center; width: 50px; height: 50px; padding: 0; border: 0; border-radius: 6px; background: none; }
.running::after, .current::after, .urgent::after { content: ""; position: absolute; bottom: 1px; width: 8px; height: 4px; border-radius: 2px; background: #7b7f8a; }
.current { background: #ebeef9; }
.current::after { width: 20px; background: #0a78d4; }
.urgent { background: #e9b0ae; }
.urgent::after { width: 40px; background: #c82b20; }
.avatar { position: absolute; top: 4px; right: 4px; border-radius: 50%; }
.pw { fill: #fff; font: 16px "Liberation Serif", serif; }
.tray { display: flex; align-items: center; justify-content: flex-end; padding: 0 24px 3px 0; }
.lang { margin: 0 22px 0 27px; text-align: center; font-size: 14px; }
.status { display: flex; gap: 10px; margin-right: 21px; }
.clock { text-align: right; font-size: 15px; }
```
